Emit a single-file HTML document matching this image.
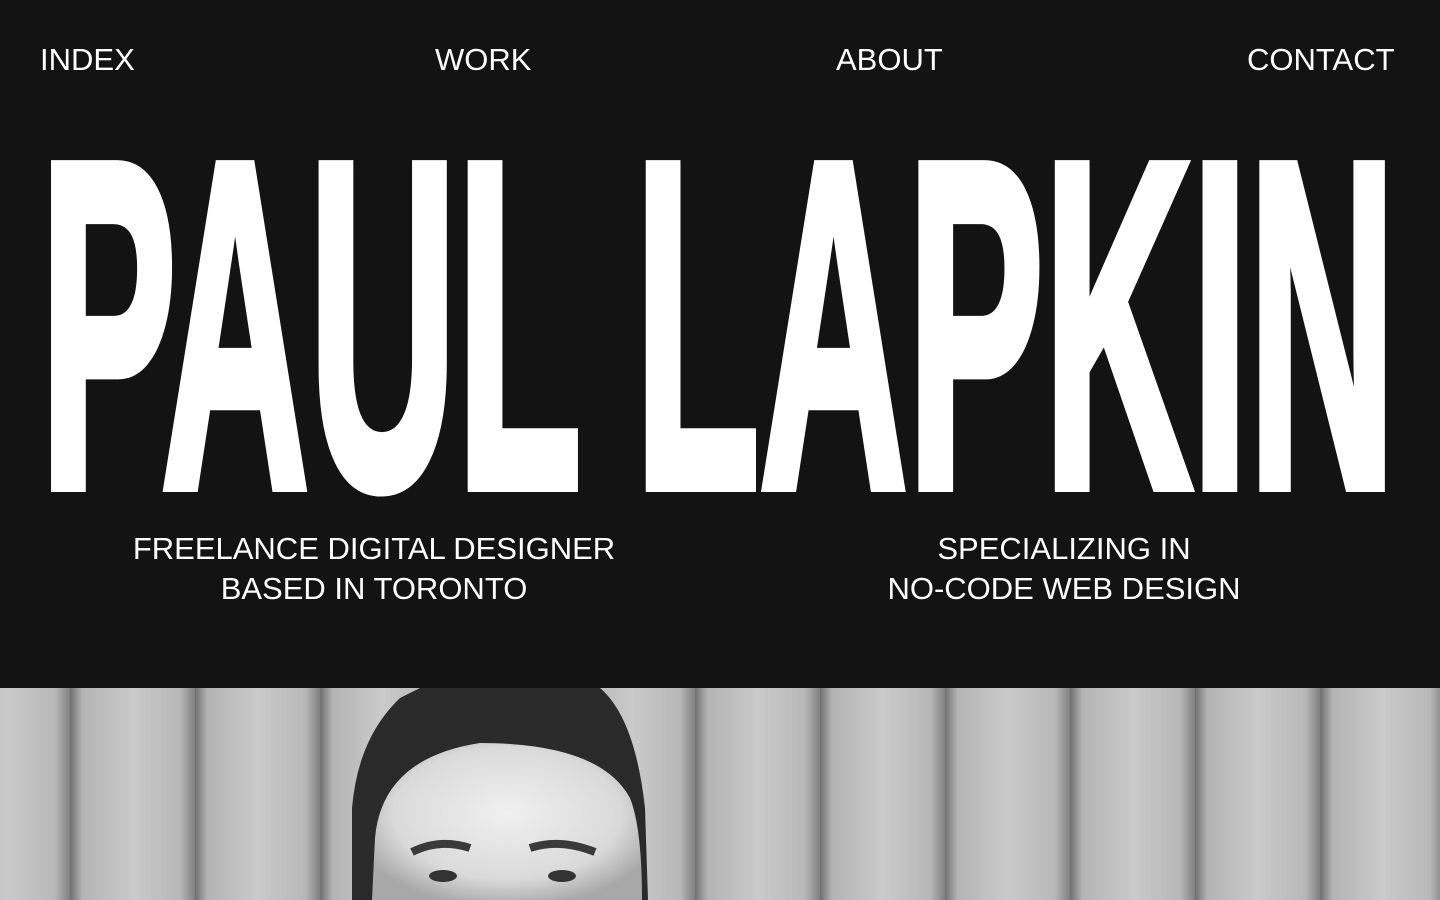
<!DOCTYPE html>
<html><head><meta charset="utf-8"><style>
html,body{margin:0;padding:0;background:#131313;width:1440px;height:900px;overflow:hidden;font-family:"Liberation Sans",sans-serif;color:#fff}
.nav{position:absolute;top:0;left:0;width:1440px;height:120px}
.nav span{position:absolute;top:42px;font-size:31px;line-height:36px;letter-spacing:0}
.sub{position:absolute;top:529px;font-size:31px;line-height:40px;text-align:center;width:700px;letter-spacing:0}
svg{position:absolute;left:0}
</style></head><body>
<div class="nav">
<span style="left:40px">INDEX</span>
<span style="left:435px">WORK</span>
<span style="left:836px">ABOUT</span>
<span style="left:1247px">CONTACT</span>
</div>
<svg width="1440" height="520" style="top:0">
<text x="40" y="486" font-family="Liberation Sans" font-weight="bold" font-size="465" fill="#fff" stroke="#fff" stroke-width="12" stroke-linejoin="miter" textLength="1356" lengthAdjust="spacingAndGlyphs">PAUL LAPKIN</text>
</svg>
<div class="sub" style="left:24px">FREELANCE DIGITAL DESIGNER<br>BASED IN TORONTO</div>
<div class="sub" style="left:714px">SPECIALIZING IN<br>NO-CODE WEB DESIGN</div>
<svg width="1440" height="212" style="top:688px">
<defs>
<linearGradient id="rib" x1="0" x2="1">
<stop offset="0" stop-color="#707070"/><stop offset="0.1" stop-color="#b4b4b4"/><stop offset="0.5" stop-color="#cacaca"/><stop offset="0.88" stop-color="#b8b8b8"/><stop offset="1" stop-color="#808080"/>
</linearGradient>
<pattern id="ribs" x="70" y="0" width="125" height="212" patternUnits="userSpaceOnUse">
<rect width="125" height="212" fill="url(#rib)"/>
</pattern>
<radialGradient id="face" cx="0.5" cy="0.45" r="0.6">
<stop offset="0" stop-color="#f0f0f0"/><stop offset="0.7" stop-color="#dadada"/><stop offset="1" stop-color="#a8a8a8"/>
</radialGradient>
</defs>
<rect width="1440" height="212" fill="url(#ribs)"/>
<path d="M352 212 L352 120 Q358 50 400 10 L420 0 L600 0 Q635 30 645 120 L648 212 Z" fill="#2a2a2a"/>
<path d="M372 212 L375 150 Q382 70 480 55 Q600 55 630 110 Q642 140 642 212 Z" fill="url(#face)"/>
<path d="M412 164 Q440 150 470 160" stroke="#3a3a3a" stroke-width="8" fill="none"/>
<path d="M530 160 Q560 150 595 164" stroke="#3a3a3a" stroke-width="8" fill="none"/>
<ellipse cx="443" cy="188" rx="14" ry="6" fill="#333"/>
<ellipse cx="562" cy="188" rx="14" ry="6" fill="#333"/>
</svg>
</body></html>
